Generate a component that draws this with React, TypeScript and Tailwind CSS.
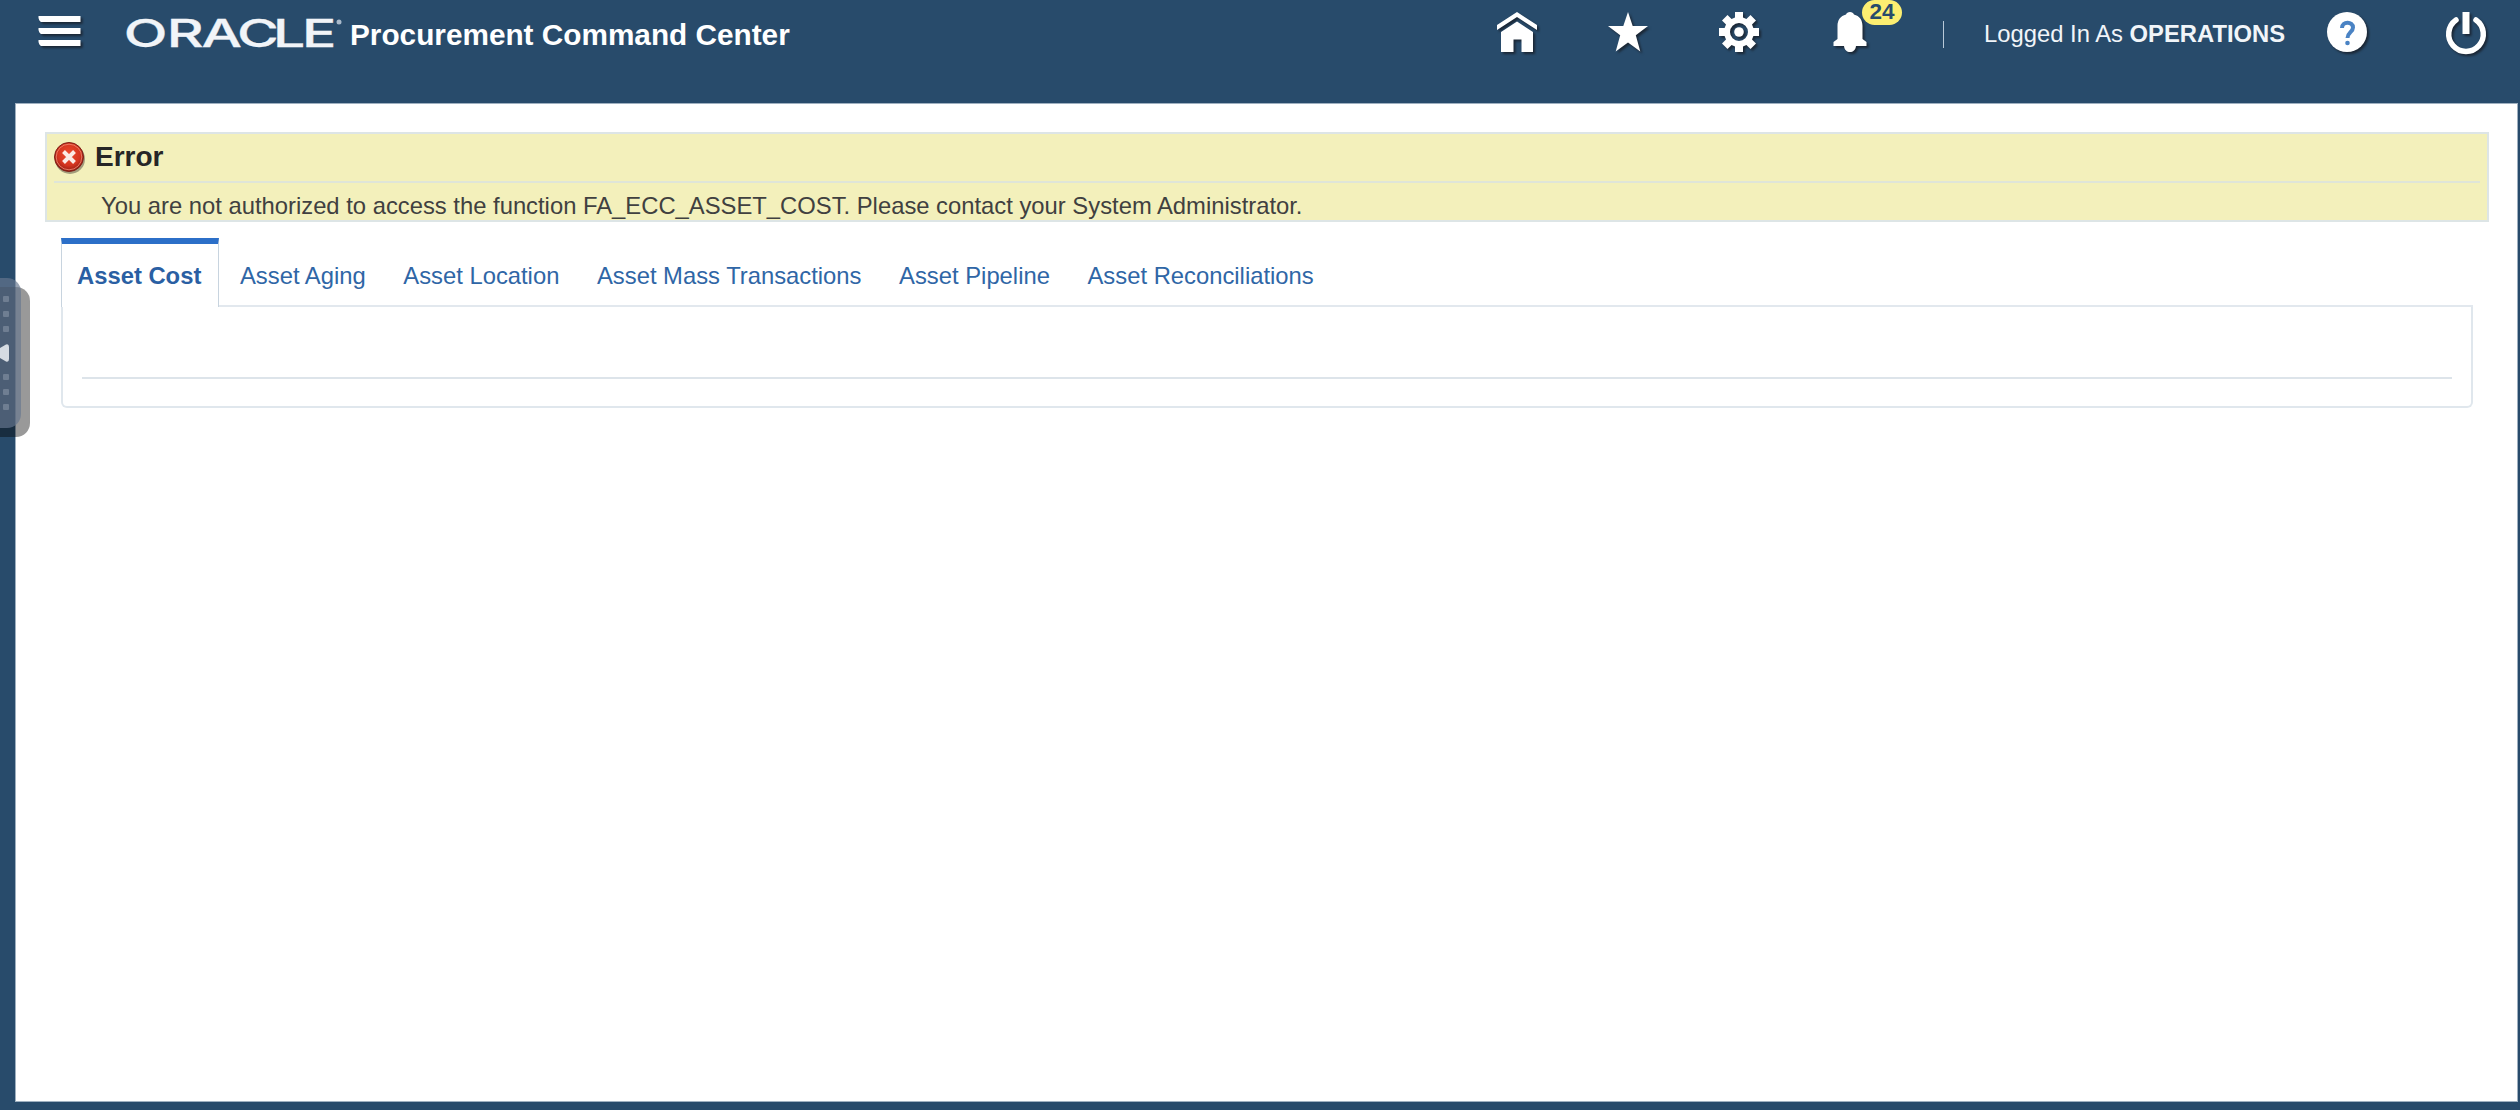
import type { ReactNode } from "react";

const tabs = [
  "Asset Aging",
  "Asset Location",
  "Asset Mass Transactions",
  "Asset Pipeline",
  "Asset Reconciliations",
];

function Icon({ className, children }: { className: string; children: ReactNode }) {
  return (
    <svg
      viewBox="0 0 40 40"
      fill="#fff"
      className={`h-10 shrink-0 overflow-visible drop-shadow-[2px_2px_1px_rgba(20,20,25,0.65)] ${className}`}
    >
      {children}
    </svg>
  );
}

function Header() {
  return (
    <header className="flex h-[103px] items-start pl-[38px] text-white">
      <Icon className="mt-[12px] w-[43px]">
        <path d="M-1 4H41V10H2Q0 10-1 6ZM-1 16H41V22H2Q0 22-1 18ZM-1 28H41V34H2Q0 34-1 30Z" />
      </Icon>
      <svg viewBox="0 0 220 40" className="ml-[43px] mt-[12px] h-10 w-[220px] overflow-visible">
        <text
          x="-0.2 28.5 51.6 75.3 99.3 118.7"
          y="34.5"
          fontSize="38"
          fontWeight="500"
          fontFamily="Inter, sans-serif"
          transform="scale(1.5 1)"
          fill="#f1f4f8"
          stroke="#f1f4f8"
          strokeWidth="0.3"
        >
          ORACLE
        </text>
        <circle cx="215" cy="10" r="2.5" fill="#a9b9ca" />
      </svg>
      <h1 className="ml-[6px] mt-[18px] whitespace-nowrap text-[29.75px] font-bold leading-[34px]">
        Procurement Command Center
      </h1>
      <div className="ml-auto flex items-start">
        <Icon className="mt-[12px] w-10">
          <path d="M20 0 40 13V18L20 5 0 18V13Z" />
          <path d="M20 9.5 36 20V40H24.5V27.5H16.5V40H4V20Z" />
        </Icon>
        <Icon className="ml-[71px] mt-[12px] w-10">
          <path d="M20 0 24.7 14H40L27.8 23.2 32.3 39.5 20 30.5 7.7 39.5 12.2 23.2 0 14H15.3Z" />
        </Icon>
        <Icon className="ml-[71px] mt-[12px] w-10">
          <path
            fillRule="evenodd"
            d="M16 0H24V5.6L27.4 7 31.5 3 37 8.5 33 12.6 34.4 16H40V24H34.4L33 27.4 37 31.5 31.5 37 27.4 33 24 34.4V40H16V34.4L12.6 33 8.5 37 3 31.5 7 27.4 5.6 24H0V16H5.6L7 12.6 3 8.5 8.5 3 12.6 7 16 5.6ZM20 11A9 9 0 1 0 20 29A9 9 0 1 0 20 11Z"
          />
          <circle cx="20" cy="20" r="4.8" />
        </Icon>
        <div className="relative ml-[71px] mt-[12px]">
          <Icon className="w-10">
            <path d="M20 0C22 0 23.500 1 24 2.500C29.500 4 32.500 8 32.500 14V27L36.500 30V34H26C25.500 38 23 40 20 40C17 40 14.500 38 14 34H3.500V30L7.500 27V14C7.500 8 10.500 4 16 2.500C16.500 1 18 0 20 0Z" />
          </Icon>
          <span className="absolute left-[32px] top-[-12px] flex h-[25px] w-[40px] items-center justify-center rounded-full bg-[#fcee71] text-[22.5px] font-bold leading-none text-[#284b6b]">
            24
          </span>
        </div>
        <div className="ml-[73px] mt-[21px] h-[27px] w-px bg-[#b9c9d8]" />
        <p className="ml-[40px] mt-[20px] w-[301px] whitespace-nowrap text-[23.8px] leading-[28px] text-[#f1f5f9]">
          Logged In As <b>OPERATIONS</b>
        </p>
        <Icon className="ml-[42px] mt-[12px] w-10">
          <circle cx="20" cy="20" r="20" />
          <path
            d="M15 16C15 9 26 9 26 15.500C26 20 20.500 20.500 20.500 26"
            fill="none"
            stroke="#4a83c4"
            strokeWidth="4"
          />
          <circle cx="20.500" cy="31" r="2.300" fill="#4a83c4" />
        </Icon>
        <Icon className="ml-[79px] mr-[34px] mt-[12px] w-10">
          <path d="M10 8A17.300 17.300 0 1 0 30 8" fill="none" stroke="#fff" strokeWidth="5.500" strokeLinecap="round" />
          <path d="M16.500 0H23.500V22H16.500Z" />
        </Icon>
      </div>
    </header>
  );
}

function ErrorBanner() {
  return (
    <section className="h-[90px] border-2 border-[#dde5e6] bg-[#f3f0bb] pl-[7px] pr-[7px]">
      <div className="flex h-[49px] items-start border-b-2 border-[#dfe5d8]">
        <svg viewBox="0 0 32 32" className="mt-[8px] h-8 w-8">
          <defs>
            <radialGradient id="ball" cx="0.5" cy="0.4" r="0.6">
              <stop offset="0" stopColor="#ee4a2c" />
              <stop offset="0.65" stopColor="#d43420" />
              <stop offset="1" stopColor="#8f1c12" />
            </radialGradient>
          </defs>
          <circle cx="16" cy="17" r="15" fill="#77705a" opacity="0.65" />
          <circle cx="15" cy="15" r="14.500" fill="url(#ball)" stroke="#7d2119" />
          <circle cx="15" cy="15" r="12.800" fill="none" stroke="#f08a73" strokeWidth="1" opacity="0.8" />
          <path d="M9.500 9.500 20.500 20.500M20.500 9.500 9.500 20.500" stroke="#fbeae5" strokeWidth="4" />
        </svg>
        <h2 className="ml-[9px] mt-[6px] text-[28px] font-bold leading-[34px] text-[#262626]">Error</h2>
      </div>
      <p className="ml-[47px] mt-[9px] whitespace-nowrap text-[23.8px] leading-[28px] text-[#404040]">
        You are not authorized to access the function FA_ECC_ASSET_COST. Please contact your System Administrator.
      </p>
    </section>
  );
}

function AssetTabs() {
  return (
    <section className="ml-[16px] mr-[16px] mt-[16px]">
      <nav className="flex h-[69px] items-stretch whitespace-nowrap text-[23.8px] leading-[28px] text-[#2f66a6]">
        <button className="flex w-[158px] items-start border-x border-t-[6px] border-x-[#c8d4df] border-t-[#2c6fc8] pl-[15px] pt-[18px] font-bold text-[#2a5fa3]">
          Asset Cost
        </button>
        <div className="flex flex-1 gap-[37.6px] border-b-2 border-[#e2e8ee] pl-[21px] pt-[24px]">
          {tabs.map((tab) => (
            <button key={tab} className="flex items-start">
              {tab}
            </button>
          ))}
        </div>
      </nav>
      <div className="h-[101px] rounded-b-[6px] border-x-2 border-b-2 border-[#e0e7ed] px-[19px] pt-[70px]">
        <div className="h-[2px] bg-[#dde4ea]" />
      </div>
    </section>
  );
}

function SideHandle() {
  const dots = "h-[6px] w-[6px] rounded-[1px] bg-[#6f7e92]";
  return (
    <div className="absolute left-0 top-[278px] h-[159px] w-[30px]">
      <div className="absolute left-0 top-[9px] h-[150px] w-[30px] rounded-r-[14px] bg-black/40" />
      <div className="absolute left-0 top-0 flex h-[150px] w-[21px] flex-col gap-[9px] rounded-r-[14px] bg-[#67778f]/67 pl-[3px] pt-[18px]">
        <i className={dots} />
        <i className={dots} />
        <i className={dots} />
        <svg viewBox="0 0 9 18" className="-ml-[3px] mb-[3px] mt-[3px] h-[18px] w-[9px] shrink-0">
          <path d="M0 4 6 .5Q9-.5 9 3V15Q9 18.500 6 17.500L0 14Z" fill="#d5dbe2" />
        </svg>
        <i className={dots} />
        <i className={dots} />
        <i className={dots} />
      </div>
    </div>
  );
}

export default function App() {
  return (
    <div className="relative h-[1110px] w-[2520px] overflow-hidden bg-[#284b6b] font-['Liberation_Sans',Arial,sans-serif]">
      <Header />
      <main className="ml-[15px] mr-[2px] h-[999px] border border-[#9fb0c0] bg-white pl-[29px] pr-[28px] pt-[28px]">
        <ErrorBanner />
        <AssetTabs />
      </main>
      <SideHandle />
    </div>
  );
}
